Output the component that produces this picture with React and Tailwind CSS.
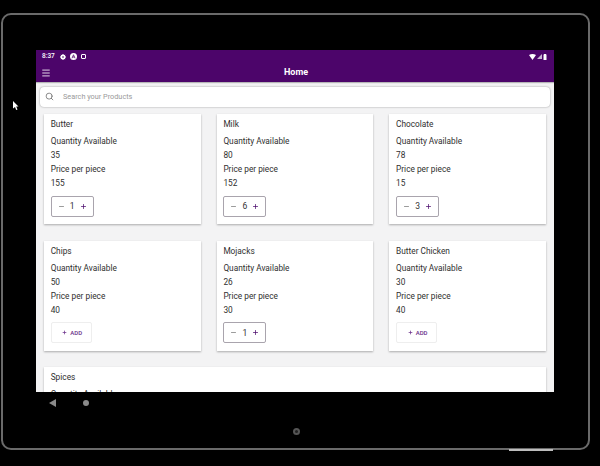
import { Menu, Search, Minus, Plus } from "lucide-react";

const products = [
  { name: "Butter", qty: 35, price: 155, count: 1 },
  { name: "Milk", qty: 80, price: 152, count: 6 },
  { name: "Chocolate", qty: 78, price: 15, count: 3 },
  { name: "Chips", qty: 50, price: 40, count: 0 },
  { name: "Mojacks", qty: 26, price: 30, count: 1 },
  { name: "Butter Chicken", qty: 30, price: 40, count: 0 },
];

function Stepper({ count }) {
  return (
    <div className="flex h-[21px] w-[43px] items-center justify-between rounded-[2px] border border-[#a9a4ad] bg-white px-[6px]">
      <Minus size={7} strokeWidth={2} className="text-[#555]" />
      <span className="text-[8.5px] text-[#333]">{count}</span>
      <Plus size={7} strokeWidth={2.5} className="text-[#4a0a6b]" />
    </div>
  );
}

function AddButton() {
  return (
    <div className="flex h-[21px] w-[41px] items-center justify-center gap-[3px] rounded-[2px] border border-[#eeeeee] bg-white pl-[2px] text-[#6a2f8a]">
      <Plus size={5} strokeWidth={3.5} />
      <span className="text-[6px] font-medium">ADD</span>
    </div>
  );
}

function ProductCard({ name, qty, price, count, wide }) {
  return (
    <div className={`${wide ? "col-span-3" : ""} h-[110px] bg-white px-[6.7px] pt-[3.4px] text-[8.3px] leading-[14px] text-[#2f2f2f] shadow-[0_1px_2px_rgba(0,0,0,0.3)]`}>
      <p>{name}</p>
      <div className="mt-[3px]">
        <p>Quantity Available</p>
        <p>{qty}</p>
        <p>Price per piece</p>
        <p>{price}</p>
      </div>
      <div className="mt-[5.6px]">
        {count > 0 ? <Stepper count={count} /> : <AddButton />}
      </div>
    </div>
  );
}

export default function App() {
  return (
    <div className="relative h-[466px] w-[600px] overflow-hidden bg-black pl-px pt-[13px] font-['Roboto',sans-serif]">
      {/* Tablet frame */}
      <div className="h-[437px] w-[589px] rounded-[10px] border-2 border-[#6a6a6a] pl-[33px] pt-[35px]">
        {/* Screen */}
        <div className="h-[342px] w-[518px] overflow-hidden bg-[#f3f3f4]">
          {/* Status bar */}
          <div className="flex h-[13px] items-center justify-between bg-[#4c056a] px-[6px] text-white">
            <div className="flex items-center gap-[4px]">
              <span className="mr-[1px] text-[6.5px] font-medium">8:37</span>
              <svg width="6" height="6" viewBox="0 0 12 12">
                <circle cx="6" cy="6" r="3.5" fill="none" stroke="#fff" strokeWidth="3" />
                <path d="M6 0 V12 M0 6 H12 M1.8 1.8 L10.2 10.2 M10.2 1.8 L1.8 10.2" stroke="#fff" strokeWidth="1.6" />
                <circle cx="6" cy="6" r="1.6" fill="#4c056a" />
              </svg>
              <svg width="7" height="7" viewBox="0 0 14 14">
                <circle cx="7" cy="7" r="7" fill="#fff" />
                <path d="M4 10.5 L7 3.5 L10 10.5 M5.2 8 H8.8" fill="none" stroke="#4c056a" strokeWidth="1.5" />
              </svg>
              <span className="h-[5px] w-[5px] rounded-[1px] border-[1.5px] border-white" />
            </div>
            <div className="mr-[1px] flex items-center gap-[1px]">
              <svg width="7" height="6" viewBox="0 0 14 12"><path d="M0 2 Q7 -2 14 2 L7 12 Z" fill="#fff" /></svg>
              <svg width="5" height="5" viewBox="0 0 10 10"><path d="M10 0 V10 H0 Z" fill="#c9b6d3" /></svg>
              <svg width="4" height="6" viewBox="0 0 8 12"><path d="M2 1 H6 V0 H2 Z M1 1 H7 V12 H1 Z" fill="#fff" /></svg>
            </div>
          </div>

          {/* App bar */}
          <div className="flex h-[19px] items-center bg-[#4c056a] pl-[5px] text-white shadow-[0_1px_1px_rgba(0,0,0,0.25)]">
            <Menu size={10} strokeWidth={2} />
            <span className="ml-[233px] text-[9px] font-bold">Home</span>
          </div>

          {/* Search */}
          <div className="mx-[4px] mt-[5px] flex h-[20px] items-center rounded-[4px] bg-white pl-[5px] shadow-[0_0_2px_rgba(0,0,0,0.4)]">
            <Search size={9} strokeWidth={2} className="mb-[1px] text-[#666]" />
            <span className="ml-[9px] text-[7.3px] text-[#9a9a9a]">Search your Products</span>
          </div>

          {/* Products */}
          <div className="ml-[8px] mt-[7px] grid grid-cols-[156.5px_156.5px_156.5px] gap-x-[16.2px] gap-y-[16.5px]">
            {products.map((product) => (
              <ProductCard key={product.name} {...product} />
            ))}
            <ProductCard name="Spices" qty={20} price={25} count={0} wide />
          </div>
        </div>

        {/* Nav bar */}
        <div className="flex h-[22px] items-center pl-[13px]">
          <svg width="7" height="8" viewBox="0 0 7 8"><path d="M7 0 V8 L0 4 Z" fill="#8a8a8a" /></svg>
          <span className="ml-[27px] h-[6px] w-[6px] rounded-full bg-[#8a8a8a]" />
        </div>

        {/* Camera */}
        <div className="ml-[-31px] mt-[14px] flex justify-center">
          <span className="flex h-[7px] w-[7px] items-center justify-center rounded-full bg-[#555]">
            <span className="h-[3px] w-[3px] rounded-full bg-[#222]" />
          </span>
        </div>
      </div>

      {/* Side button highlight */}
      <div className="absolute left-[509px] top-[449px] h-[2px] w-[44px] bg-[#bdbdbd]" />

      {/* Mouse cursor */}
      <svg className="absolute left-[13px] top-[101px]" width="6" height="9" viewBox="0 0 6 9">
        <path d="M0 0 L5.5 5.5 H3.2 L4.5 8.4 L3.2 9 L2 6 L0 7.6 Z" fill="#fff" />
      </svg>
    </div>
  );
}
